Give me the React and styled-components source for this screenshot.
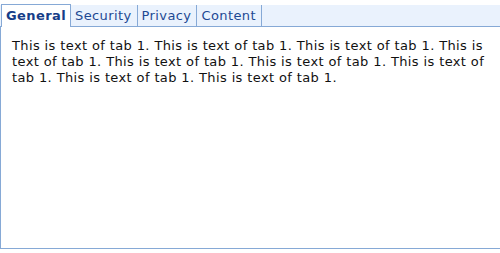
import React from "react";
import styled, { createGlobalStyle } from "styled-components";

const Global = createGlobalStyle`
  html, body { margin: 0; padding: 0; background: #fff; overflow: hidden; }
  body { font-family: "DejaVu Sans", Verdana, sans-serif; }
`;

const Wrap = styled.div`
  width: 500px;
  padding-top: 4px;
`;

const Strip = styled.div`
  display: flex;
  align-items: flex-end;
  height: 22px;
  background: linear-gradient(#fff 0 1px, #eaf2fd 1px);
  border-bottom: 1px solid #86a9d6;
  padding-left: 1px;
`;

const Tab = styled.div`
  box-sizing: border-box;
  height: ${(p) => (p.$active ? "23px" : "21px")};
  margin-bottom: ${(p) => (p.$active ? "-1px" : "0")};
  padding: 0 ${(p) => (p.$active ? "4px" : "5px")} ${(p) => (p.$active ? "1px" : "0")} 4px;
  display: flex;
  align-items: center;
  font-size: 13px;
  letter-spacing: 0.4px;
  font-weight: ${(p) => (p.$active ? "bold" : "normal")};
  color: ${(p) => (p.$active ? "#163d88" : "#1d4994")};
  background: ${(p) => (p.$active ? "#fff" : "transparent")};
  border-right: 1px solid #86a9d6;
  border-left: ${(p) => (p.$active ? "1px solid #86a9d6" : "none")};
  border-top: ${(p) => (p.$active ? "1px solid #86a9d6" : "none")};
`;

const Panel = styled.div`
  box-sizing: border-box;
  height: 222px;
  border-left: 1px solid #86a9d6;
  border-bottom: 1px solid #86a9d6;
  padding: 11px 12px 0 11px;
  font-size: 13px;
  letter-spacing: 0.38px;
  line-height: 16px;
  color: #111;
`;

const tabs = ["General", "Security", "Privacy", "Content"];

export default function App() {
  const text = Array(9).fill("This is text of tab 1.").join(" ");
  return (
    <>
      <Global />
      <Wrap>
        <Strip>
          {tabs.map((t, i) => (
            <Tab key={t} $active={i === 0}>
              {t}
            </Tab>
          ))}
        </Strip>
        <Panel>{text}</Panel>
      </Wrap>
    </>
  );
}
